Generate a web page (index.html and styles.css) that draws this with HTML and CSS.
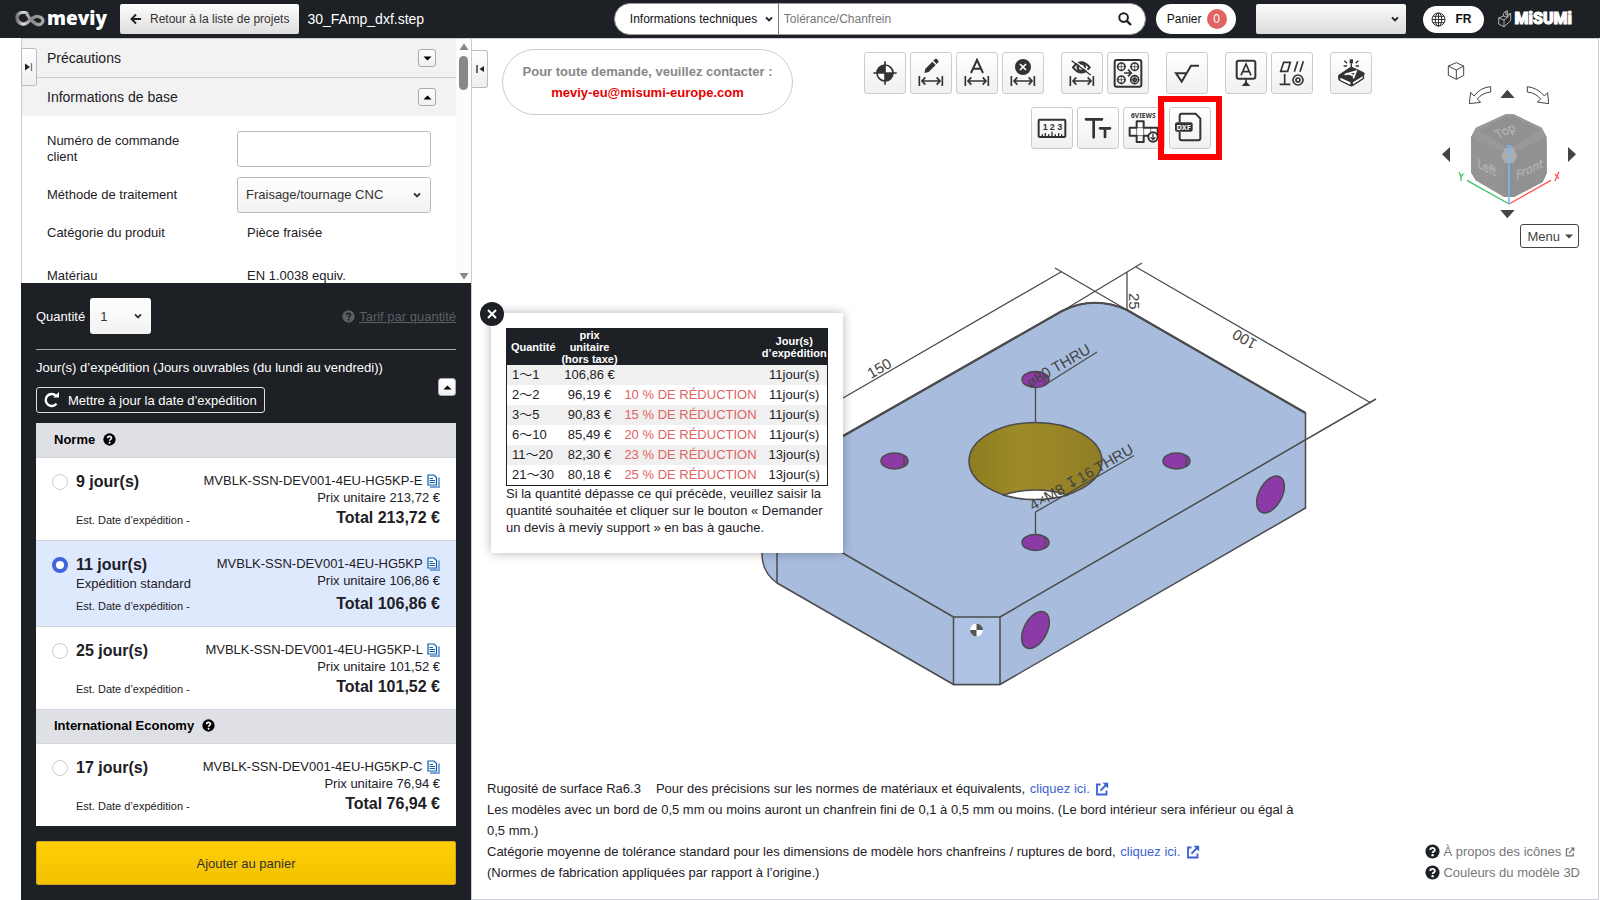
FILE: index.html
```html
<!DOCTYPE html>
<html lang="fr">
<head>
<meta charset="utf-8">
<title>meviy</title>
<link rel="stylesheet" href="styles.css">
</head>
<body>
<svg class="defs" aria-hidden="true">
  <symbol id="chev" viewBox="0 0 8 6"><path d="M1 1.3 4 4.3 7 1.3" fill="none" stroke="currentColor" stroke-width="1.9"/></symbol>
  <symbol id="help" viewBox="0 0 14 14"><circle cx="7" cy="7" r="6.6" fill="currentColor"/><path d="M4.9 5.6C4.9 3 9.2 3.1 9.2 5.5 9.2 7 7.1 6.9 7.1 8.4" fill="none" stroke="var(--mark,#fff)" stroke-width="1.7"/><circle cx="7.1" cy="10.4" r="1.1" fill="var(--mark,#fff)"/></symbol>
  <symbol id="copy" viewBox="0 0 13 14"><path d="M3 13h9V3.5" fill="none" stroke="#7aa6dc" stroke-width="2"/><path d="M1 1h6l2.500 2.500V11H1z" fill="#fff" stroke="#0b5cad" stroke-width="1.2"/><path d="M2.500 4.500H6M2.500 6.500H8M2.500 8.500H8" stroke="#0b5cad"/></symbol>
  <symbol id="ext" viewBox="0 0 14 14"><path d="M5.5 2.5H2v10h9.5V8.5" fill="none" stroke="currentColor" stroke-width="1.8"/><path d="M5.5 8.7 11 3" stroke="currentColor" stroke-width="1.9"/><path d="M7.5.8H13.200V6.500z" fill="currentColor"/></symbol>
  <symbol id="dim" viewBox="0 0 120 120"><path d="M28 72V102M97 72V102M36 87H90M46 76 36 87 46 98M80 76 90 87 80 98" fill="none" stroke="#333" stroke-width="5"/></symbol>
</svg>

<header class="topbar">
  <a class="logo" href="#" aria-label="meviy">
    <svg width="30" height="16" viewBox="0 0 30 16"><defs><linearGradient id="lg" x1="0" y1="0" x2="1" y2="0"><stop offset="0" stop-color="#777"/><stop offset=".25" stop-color="#ddd"/><stop offset=".55" stop-color="#888"/><stop offset="1" stop-color="#aaa"/></linearGradient></defs><path d="M13 3C9-.5 1.500 1.500 2 7c.5 6 7 7.500 10.500 4.500C16 8 19 5 23 5.500c5 .5 6.500 5 3 7.500-3.500 2-6-.5-9-3S14 4.500 11.500 3" fill="none" stroke="url(#lg)" stroke-width="3.200"/></svg>
    <span class="wordmark">meviy</span>
  </a>
  <button class="back"><svg width="12" height="12" viewBox="0 0 12 12"><path d="M11 6H2M6 1.5 1.5 6 6 10.5" fill="none" stroke="#222" stroke-width="1.9"/></svg>Retour à la liste de projets</button>
  <h1 class="file">30_FAmp_dxf.step</h1>
  <form class="search">
    <span class="sel"><select aria-label="Type de recherche"><option>Informations techniques</option></select><svg class="chev"><use href="#chev"/></svg></span>
    <input type="text" aria-label="Recherche" placeholder="Tolérance/Chanfrein">
    <button type="button" aria-label="Rechercher"><svg width="14" height="14" viewBox="0 0 14 14"><circle cx="5.6" cy="5.6" r="4.3" fill="none" stroke="#1d2025" stroke-width="2"/><path d="M8.8 8.8 13 13" stroke="#1d2025" stroke-width="2.4"/></svg></button>
  </form>
  <button class="cart">Panier <span class="count">0</span></button>
  <span class="sel account"><select aria-label="Compte"><option></option></select><svg class="chev"><use href="#chev"/></svg></span>
  <button class="lang"><svg width="15" height="15" viewBox="0 0 15 15" fill="none" stroke="#333" stroke-width="1"><circle cx="7.5" cy="7.5" r="6.5"/><ellipse cx="7.5" cy="7.5" rx="3.2" ry="6.5"/><path d="M7.5 1V14M1 7.5H14M2 4.3H13M2 10.7H13"/></svg>FR</button>
  <a class="misumi" href="#"><svg width="14" height="18" viewBox="0 0 42 54" fill="none" stroke="#ccc" stroke-width="2.500"><path d="M2 24 16 18V10L24 4 28 2V14L38 10V32L18 50 2 42zM2 24 18 30V50M18 30 28 22V14M16 18 28 22 38 10M24 4V16"/></svg><span>MiSUMi</span></a>
</header>

<main class="workspace">
  <aside class="side">
    <button class="fold fold-left" aria-label="Replier le panneau"><svg width="8" height="10" viewBox="0 0 8 10"><path d="M0 1.5 5 5 0 8.5z" fill="#222"/><path d="M6.5 1V9" stroke="#777" stroke-width="1.300"/></svg></button>
    <div class="scroller">
      <div class="scroll-body">
        <h2 class="section first">Précautions<button class="tog" aria-label="Ouvrir"><svg width="9" height="5" viewBox="0 0 9 5"><path d="M.5.5h8L4.5 4.5z"/></svg></button></h2>
        <h2 class="section">Informations de base<button class="tog" aria-label="Fermer"><svg width="9" height="5" viewBox="0 0 9 5"><path d="M.5 4.5h8L4.5.5z"/></svg></button></h2>
        <div class="fields">
          <label for="ordernum">Numéro de commande client</label>
          <input id="ordernum" type="text">
          <label for="method">Méthode de traitement</label>
          <span class="sel method"><select id="method"><option>Fraisage/tournage CNC</option></select><svg class="chev"><use href="#chev"/></svg></span>
          <span class="k">Catégorie du produit</span><span class="v">Pièce fraisée</span>
          <span class="k last">Matériau</span><span class="v last">EN 1.0038 equiv.</span>
        </div>
      </div>
      <div class="bar"><svg width="10" height="8" viewBox="0 0 10 8"><path d="M5 .5 9.5 7H.5z" fill="#888"/></svg><span class="thumb"></span><svg width="10" height="8" viewBox="0 0 10 8"><path d="M5 7.5 9.5 1H.5z" fill="#888"/></svg></div>
    </div>

    <section class="order">
      <div class="qty">
        <label for="qty">Quantité</label>
        <span class="sel qsel"><select id="qty"><option>1</option></select><svg class="chev"><use href="#chev"/></svg></span>
        <a class="tarif" href="#"><svg width="13" height="13"><use href="#help"/></svg><span>Tarif par quantité</span></a>
      </div>
      <p class="ship">Jour(s) d’expédition (Jours ouvrables (du lundi au vendredi))</p>
      <div class="refresh-row">
        <button class="refresh"><svg width="16" height="16" viewBox="0 0 16 16"><path d="M12.5 11.600A6 6 0 1 1 12 3.800" fill="none" stroke="#fff" stroke-width="2.4"/><path d="M9.200 5.500H15V0z" fill="#fff"/></svg>Mettre à jour la date d’expédition</button>
        <button class="tog" aria-label="Fermer"><svg width="9" height="5" viewBox="0 0 9 5"><path d="M.5 4.5h8L4.5.5z"/></svg></button>
      </div>
      <div class="plans">
        <h3>Norme<svg width="13" height="13"><use href="#help"/></svg></h3>
        <label class="plan"><input type="radio" name="plan"><span class="when"><b>9 jour(s)</b><small>Est. Date d’expédition -</small></span><span class="cost"><span>MVBLK-SSN-DEV001-4EU-HG5KP-E <svg class="cp"><use href="#copy"/></svg></span><span>Prix unitaire 213,72 €</span><b>Total 213,72 €</b></span></label>
        <label class="plan on"><input type="radio" name="plan" checked><span class="when"><b>11 jour(s)</b><span>Expédition standard</span><small>Est. Date d’expédition -</small></span><span class="cost"><span>MVBLK-SSN-DEV001-4EU-HG5KP <svg class="cp"><use href="#copy"/></svg></span><span>Prix unitaire 106,86 €</span><b>Total 106,86 €</b></span></label>
        <label class="plan"><input type="radio" name="plan"><span class="when"><b>25 jour(s)</b><small>Est. Date d’expédition -</small></span><span class="cost"><span>MVBLK-SSN-DEV001-4EU-HG5KP-L <svg class="cp"><use href="#copy"/></svg></span><span>Prix unitaire 101,52 €</span><b>Total 101,52 €</b></span></label>
        <h3 class="eco">International Economy<svg width="13" height="13"><use href="#help"/></svg></h3>
        <label class="plan"><input type="radio" name="plan"><span class="when"><b>17 jour(s)</b><small>Est. Date d’expédition -</small></span><span class="cost"><span>MVBLK-SSN-DEV001-4EU-HG5KP-C <svg class="cp"><use href="#copy"/></svg></span><span>Prix unitaire 76,94 €</span><b>Total 76,94 €</b></span></label>
      </div>
      <button class="add">Ajouter au panier</button>
    </section>
  </aside>

  <section class="viewer">
    <svg class="model" viewBox="472 39 1126 860" role="img" aria-label="Modèle 3D">
      <defs><linearGradient id="bore"><stop offset="0" stop-color="#8d7d20"/><stop offset=".35" stop-color="#9c8a29"/><stop offset=".6" stop-color="#9a8728"/><stop offset="1" stop-color="#8f7d24"/></linearGradient></defs>
      <g stroke="#4b4b4b" stroke-width="1.5" stroke-linejoin="round">
        <path d="M764 494 777 474 1062 311Q1094 295 1127 310L1305.5 413V508L1000 684.5H953.5L777 583Q763 573 762 556V505z" fill="#a8bcde"/>
        <path d="M953.5 617H1000V684.5H953.5z" fill="#aec2e6"/>
        <path d="M777 515V583M777 515 953.5 617M1000 617 1376 399" fill="none"/>
        <path d="M843 436 1062 311Q1094 295 1127 310L1305.5 413" fill="none" stroke-width="2.2"/>
        <path d="M843 398 1061 272M1055 268 1127 310M1064 310 1142 263M1136 267 1371 403M1127 272V310" fill="none" stroke-width="1.3"/>
        <ellipse cx="1035.5" cy="461" rx="66.5" ry="38.5" fill="url(#bore)"/>
        <path d="M1003 495Q1035 485 1068 495Q1035 504 1003 495z" fill="#fff"/>
        <g fill="#8c3ba6">
          <ellipse cx="1035.5" cy="379.5" rx="13.5" ry="8"/><ellipse cx="894.5" cy="461" rx="13.5" ry="8"/><ellipse cx="1176.5" cy="461" rx="13.5" ry="8"/><ellipse cx="1035.5" cy="542.5" rx="13.5" ry="8"/>
          <ellipse cx="1270.5" cy="494.5" rx="11.5" ry="20" transform="rotate(28 1270.5 494.5)"/><ellipse cx="1035.5" cy="630" rx="11.5" ry="20" transform="rotate(28 1035.5 630)"/>
        </g>
        <path d="M1045 374V385M904 455.5V466.5M1186 455.5V466.5M1045 537V548M1035.5 387V422.5M1043 386 1097 352M1035.5 534V512L1134 455.5" fill="none" stroke-width="1.3"/>
      </g>
      <circle cx="976.5" cy="630" r="6.5" fill="#fff"/><path d="M976.5 630V623.5A6.5 6.5 0 0 1 983 630zM976.5 630V636.5A6.5 6.5 0 0 1 970 630z" fill="#555"/>
      <g class="dims">
        <text transform="translate(871 379) rotate(-30)">150</text>
        <text transform="translate(1258 341) rotate(210)">100</text>
        <text transform="translate(1129 293) rotate(90)">25</text>
        <text transform="translate(1030 388) rotate(-30)">⌀80 THRU</text>
        <text transform="translate(1033 511) rotate(-30)">4×M8 ↧16 THRU</text>
      </g>
    </svg>

    <div class="viewer-top">
      <button class="fold fold-right" aria-label="Replier"><svg width="8" height="10" viewBox="0 0 8 10"><path d="M8 2 3.5 5 8 8z" fill="#222"/><path d="M1 1V9" stroke="#222" stroke-width="1.300"/></svg></button>
      <div class="contact">Pour toute demande, veuillez contacter :<a href="#">meviy-eu@misumi-europe.com</a></div>
      <div class="tools">
        <div class="row">
          <div class="grp">
            <button aria-label="Origine"><svg viewBox="3 3 120 120"><circle cx="63" cy="63" r="24" fill="#fff" stroke="#333" stroke-width="5"/><path d="M63 63V39A24 24 0 0 0 39 63zM63 63V87A24 24 0 0 0 87 63z" fill="#333"/><path d="M63 28V98M28 63H98" stroke="#333" stroke-width="5"/></svg></button>
            <button aria-label="Modifier la cote"><svg viewBox="3 3 120 120"><use href="#dim" width="120" height="120"/><path d="M43 63 46 50 67 29 77 39 56 60zM70 26 75 21Q79 19 83 23T85 31L80 36z" fill="#333"/></svg></button>
            <button aria-label="Cote automatique"><svg viewBox="3 3 120 120"><use href="#dim" width="120" height="120"/><path d="M45 63 63 24 81 63M51 50H75" fill="none" stroke="#333" stroke-width="6"/></svg></button>
            <button aria-label="Supprimer la cote"><svg viewBox="3 3 120 120"><use href="#dim" width="120" height="120"/><circle cx="63" cy="45" r="24" fill="#333"/><path d="M54 36 72 54M72 36 54 54" stroke="#fff" stroke-width="5"/></svg></button>
          </div>
          <div class="grp">
            <button aria-label="Masquer la cote"><svg viewBox="3 3 120 120"><use href="#dim" width="120" height="120"/><path d="M36 46Q61 15 86 46Q61 77 36 46z" fill="#fff" stroke="#333" stroke-width="6"/><circle cx="61" cy="46" r="11" fill="none" stroke="#333" stroke-width="7"/><path d="M35 22 92 65" stroke="#fff" stroke-width="4"/><path d="M32 26 89 69" stroke="#333" stroke-width="4"/></svg></button>
            <button aria-label="Groupe de trous"><svg viewBox="3 3 120 120" fill="none" stroke="#333" stroke-width="6"><rect x="23" y="24" width="80" height="80" rx="6"/><g stroke-width="5"><circle cx="43" cy="44" r="11"/><circle cx="83" cy="44" r="11"/><circle cx="43" cy="83" r="11"/><circle cx="83" cy="83" r="12"/><circle cx="83" cy="83" r="5"/></g><path stroke-width="2" d="M29 44H57M43 30V58M69 44H97M83 30V58M29 83H57M43 69V97M69 83H97M83 69V97"/><path stroke-width="5" d="M51 63H72M63 53 73 63 63 73"/></svg></button>
          </div>
          <div class="grp"><button aria-label="Rugosité"><svg viewBox="3 3 120 120"><path d="M99 41H75L47 89 30 64H61" fill="none" stroke="#333" stroke-width="6"/></svg></button></div>
          <div class="grp">
            <button aria-label="Référence"><svg viewBox="3 3 120 120"><rect x="35" y="26" width="56" height="54" rx="6" fill="none" stroke="#333" stroke-width="6"/><path d="M48 70 63 36 78 70M53 59H73M63 80V95" fill="none" stroke="#333" stroke-width="5"/><path d="M63 88 76 102H50z" fill="#333"/></svg></button>
            <button aria-label="Tolérance géométrique"><svg viewBox="3 3 120 120" fill="none" stroke="#333" stroke-width="5"><path d="M38 31H58L50 58H29zM80 28 70 59M97 28 87 59M41 66V96M26 97H58"/><circle cx="81" cy="84" r="15"/><circle cx="81" cy="84" r="6"/></svg></button>
          </div>
          <div class="grp"><button aria-label="Gravure"><svg viewBox="3 3 120 120"><path d="M26 70 60 47Q64 45 68 47L101 62Q105 65 101 69V80L68 101Q64 103 60 101L28 85Q25 84 26 70z" fill="#333" stroke="#333" stroke-width="3"/><path d="M31 77 61 91V98L31 84zM69 91 98 73V79L69 97z" fill="#fff"/><path d="M44 68 78 58 70 79M56 65 71 71" fill="none" stroke="#fff" stroke-width="5"/><path d="M64 22V34" stroke="#333" stroke-width="10"/><path d="M64 34V46M43 26 51 34M85 26 77 34M41 42H51M77 42H87" stroke="#333" stroke-width="4"/></svg></button></div>
        </div>
        <div class="row">
          <div class="grp">
            <button aria-label="Mesurer"><svg viewBox="3 3 120 120"><rect x="23" y="38" width="80" height="52" rx="3" fill="none" stroke="#333" stroke-width="6"/><path d="M34 90V82M43 90V78M53 90V82M63 90V74M73 90V82M83 90V78M92 90V82" stroke="#333" stroke-width="4"/><text x="43" y="69" class="t123">1</text><text x="64" y="69" class="t123">2</text><text x="86" y="69" class="t123">3</text></svg></button>
            <button aria-label="Taille du texte"><svg viewBox="3 3 120 120"><path d="M27 37H75M50 37V91M69 64H99M84 64V90" stroke="#333" stroke-width="8" stroke-linecap="round"/></svg></button>
            <button aria-label="6 vues"><svg viewBox="3 3 120 120"><text x="61" y="32" class="tv">6VIEWS</text><path d="M41 43H62V62H104V86H62V105H41V86H20V62H41z" fill="#fff" stroke="#333" stroke-width="6" stroke-linejoin="round"/><path d="M41 62H62V86H41zM83 62V86" fill="none" stroke="#333" stroke-width="2"/><circle cx="90" cy="90" r="14" fill="#fff" stroke="#333" stroke-width="6"/><path d="M90 80V97M83 91 90 98 97 91" fill="none" stroke="#333" stroke-width="4"/></svg></button>
            <button class="dxf" aria-label="Exporter DXF"><svg viewBox="3 3 120 120"><path d="M32 46V26Q32 20 38 20H80L94 35V94Q94 100 88 100H38Q32 100 32 94V74" fill="none" stroke="#333" stroke-width="6"/><rect x="18" y="46" width="53" height="28" rx="6" fill="#333"/><text x="44" y="68" class="tdxf">DXF</text></svg></button>
          </div>
        </div>
      </div>
      <nav class="nav3d">
        <svg width="140" height="162" viewBox="1020 174 420 486">
          <g fill="#fff" stroke="#444" stroke-width="3" stroke-linejoin="round"><path d="M1069 188 1091 198V226L1069 238 1045 226V198zM1045 198 1069 210 1091 198M1069 210V238"/><path d="M1172 260Q1142 262 1122 288L1112 277 1108 311 1142 307 1132 297Q1146 279 1172 276zM1282 260Q1314 264 1333 288L1343 278 1346 311 1312 306 1322 297Q1308 279 1282 276z"/></g>
          <path d="M1201 294H1244L1222 269zM1201 630H1244L1222 655zM1050 441V486L1026 463zM1404 441V486L1428 463z" fill="#444"/>
          <path d="M1217 343H1241L1325 383 1340 412V520L1328 546 1243 591H1212L1127 541 1113 517V412L1128 383z" fill="#8f8f8f"/>
          <path d="M1113 425 1130 415 1204 453V478L1215 490V591L1127 541 1113 517z" fill="#949494"/><path d="M1340 425 1325 415 1250 453V478L1239 490V591L1328 546 1340 520z" fill="#919191"/><path d="M1128 383 1217 343H1241L1325 383 1340 412 1250 453 1241 444H1215L1204 453 1113 412z" fill="#999"/><path d="M1217 350H1241L1318 390 1238 440H1217L1137 392z" fill="#919191"/><path d="M1215 444H1241L1252 467 1241 489H1215L1203 467z" fill="#adadad"/>
          <g class="faces"><text transform="matrix(.88 -.4 .5 .85 1194 416)">Top</text><text transform="matrix(.88 .42 0 1 1132 502)">Left</text><text transform="matrix(.88 -.42 0 1 1249 539)">Front</text></g>
          <path d="M1227 612 1101 541" stroke="#3cc463" stroke-width="4"/><path d="M1227 612 1353 541" stroke="#f55" stroke-width="4"/><path d="M1227 612V467" stroke="#78b7f5" stroke-width="5"/>
          <path d="M1220 436 1235 440 1219 456 1234 460" stroke="#78b7f5" stroke-width="4" fill="none"/><path d="M1077 517 1083 530 1090 521M1083 530V542" stroke="#3cc463" stroke-width="4" fill="none"/><path d="M1365 522 1377 536M1377 515 1365 543" stroke="#f55" stroke-width="4" fill="none"/>
        </svg>
        <button class="menu">Menu<svg width="8" height="5" viewBox="0 0 8 5"><path d="M0 .5h8L4 4.5z" fill="#444"/></svg></button>
      </nav>
    </div>

    <div class="popup" role="dialog" aria-label="Tarif par quantité">
      <button class="close" aria-label="Fermer"><svg width="10" height="10" viewBox="0 0 10 10"><path d="M1 1 9 9M9 1 1 9" stroke="#fff" stroke-width="2"/></svg></button>
      <table>
        <thead><tr><th class="c1">Quantité</th><th class="c2">prix unitaire (hors taxe)</th><th></th><th class="c4">Jour(s) d’expédition</th></tr></thead>
        <tbody>
          <tr><td>1～1</td><td>106,86 €</td><td></td><td>11jour(s)</td></tr>
          <tr><td>2～2</td><td>96,19 €</td><td>10 % DE RÉDUCTION</td><td>11jour(s)</td></tr>
          <tr><td>3～5</td><td>90,83 €</td><td>15 % DE RÉDUCTION</td><td>11jour(s)</td></tr>
          <tr><td>6～10</td><td>85,49 €</td><td>20 % DE RÉDUCTION</td><td>11jour(s)</td></tr>
          <tr><td>11～20</td><td>82,30 €</td><td>23 % DE RÉDUCTION</td><td>13jour(s)</td></tr>
          <tr><td>21～30</td><td>80,18 €</td><td>25 % DE RÉDUCTION</td><td>13jour(s)</td></tr>
        </tbody>
      </table>
      <p>Si la quantité dépasse ce qui précède, veuillez saisir la quantité souhaitée et cliquer sur le bouton « Demander un devis à meviy support » en bas à gauche.</p>
    </div>

    <footer class="notes">
      <div class="txt">
        <p><span class="ra">Rugosité de surface Ra6.3</span>Pour des précisions sur les normes de matériaux et équivalents, <a href="#">cliquez ici. <svg><use href="#ext"/></svg></a></p>
        <p>Les modèles avec un bord de 0,5 mm ou moins auront un chanfrein fini de 0,1 à 0,5 mm ou moins. (Le bord intérieur sera inférieur ou égal à 0,5 mm.)</p>
        <p>Catégorie moyenne de tolérance standard pour les dimensions de modèle hors chanfreins / ruptures de bord, <a href="#">cliquez ici. <svg><use href="#ext"/></svg></a></p>
        <p>(Normes de fabrication appliquées par rapport à l’origine.)</p>
      </div>
      <div class="helps">
        <a href="#"><svg class="q"><use href="#help"/></svg>À propos des icônes <svg class="e"><use href="#ext"/></svg></a>
        <a href="#"><svg class="q"><use href="#help"/></svg>Couleurs du modèle 3D</a>
      </div>
    </footer>
  </section>
</main>
</body>
</html>
```
FILE: styles.css
```css
* { box-sizing: border-box; }
body {
  margin: 0;
  height: 100vh;
  display: flex;
  flex-direction: column;
  overflow: hidden;
  background: #fff;
  color: #1d2025;
  font: 13px/17px "Liberation Sans", Arial, "Noto Sans CJK JP", sans-serif;
}
button, input, select { font: inherit; color: inherit; margin: 0; }
button { padding: 0; border: 0; background: none; }
h1, h2, h3, p { margin: 0; font: inherit; }
a { color: inherit; text-decoration: none; }
svg { flex: none; }
.defs { position: absolute; width: 0; height: 0; }

.sel { display: inline-grid; align-items: center; }
.sel > * { grid-area: 1 / 1; }
.sel select { appearance: none; width: 100%; height: 100%; border: 0; background: none; border-radius: 2px; outline: 0; }
.chev { width: 8px; height: 6px; justify-self: end; margin-right: 9px; pointer-events: none; }

/* Top bar */
.topbar {
  flex: none;
  display: flex;
  align-items: center;
  height: 38px;
  padding: 0 28px 0 15px;
  background: #1d2025;
  font-size: 12px;
}
.logo { display: flex; align-items: center; gap: 2px; width: 105px; color: #fff; }
.wordmark { font: 800 19px/30px "Open Sans", sans-serif; margin-bottom: 2px; }
.back {
  display: flex; align-items: center; gap: 8px;
  height: 30px; padding: 0 10px;
  border-radius: 2px;
  background: linear-gradient(#fdfdfd, #dedede);
  color: #333;
}
.file { margin-left: 8px; color: #fff; font-size: 14px; }
.search {
  display: flex; align-items: center;
  width: 532px; height: 32px;
  margin-left: auto;
  background: #fff;
  border: 1px solid #999;
  border-radius: 16px;
}
.search .sel { width: 164px; height: 30px; border-right: 1px solid #777; }
.search select { padding: 0 0 0 15px; color: #111; }
.search .chev { margin-right: 5px; }
.search input { flex: 1; min-width: 0; border: 0; padding: 0 5px; background: none; outline: 0; }
.search input::placeholder { color: #777; }
.search button { padding: 0 13px; display: flex; }
.cart {
  display: flex; align-items: center; gap: 5px;
  height: 30px; margin-left: 10px; padding: 0 9px 0 11px;
  border-radius: 15px; background: #fff; color: #111;
}
.count { width: 20px; height: 20px; border-radius: 50%; background: #e06464; color: #fff; line-height: 20px; }
.account { width: 150px; height: 30px; margin-left: 20px; border-radius: 2px; background: linear-gradient(#fafafa, #dcdcdc); }
.account .chev { margin-right: 7px; }
.lang {
  display: flex; align-items: center; gap: 10px;
  height: 27px; margin-left: 17px; padding: 0 12px 0 8px;
  border-radius: 14px; background: #fff; font-weight: bold; color: #111;
}
.misumi { display: flex; align-items: center; gap: 3px; margin-left: 14px; color: #fff; font: 900 16px/20px Roboto, sans-serif; -webkit-text-stroke: 1px #fff; }

/* Workspace */
.workspace { flex: 1; min-height: 0; display: flex; padding: 0 1px 0 21px; }
.side { flex: none; width: 451px; display: flex; flex-direction: column; position: relative; border-right: 1px solid #ccc; }
.fold {
  display: grid; place-items: center;
  width: 16px; height: 38px;
  border: 1px solid #bbb;
  background: linear-gradient(#fff, #eee);
}
.fold-left { position: absolute; left: 0; top: 10px; border-radius: 0 3px 3px 0; }
.fold-right { margin-top: 11px; border-left: 0; border-radius: 0 3px 3px 0; }
.scroller { height: 245px; flex: none; display: flex; border: solid #ccc; border-width: 1px 0 0 1px; }
.scroll-body { flex: 1; overflow: hidden; }
.section {
  display: flex; align-items: center; justify-content: space-between;
  height: 38px; padding: 0 20px 0 25px;
  background: #f2f2f2;
  font-size: 14px;
}
.first { height: 39px; border-bottom: 1px solid #ccc; }
.tog {
  display: grid; place-items: center;
  width: 18px; height: 18px;
  border: 1px solid #aaa; border-radius: 3px;
  background: linear-gradient(#fff, #f0f0f0);
}
.fields { display: grid; grid-template-columns: 145px 194px; column-gap: 45px; row-gap: 10px; padding: 15px 0 0 25px; line-height: 16px; align-items: center; }
.fields input { height: 36px; border: 1px solid #bbb; border-radius: 3px; }
.method { height: 36px; border: 1px solid #bbb; border-radius: 3px; background: linear-gradient(#fff, #f2f2f2); color: #333; }
.method select { padding: 0 8px; }
.fields .k, .fields .v { height: 20px; line-height: 20px; }
.fields .v { padding-left: 10px; }
.fields .last { margin-top: 13px; }
.bar { width: 15px; display: flex; flex-direction: column; align-items: center; padding: 4px 0 3px; background: #fcfcfc; }
.thumb { width: 9px; height: 34px; margin: 5px 0 auto; border-radius: 5px; background: #888; }

/* Order panel */
.order { flex: 1; display: flex; flex-direction: column; padding: 15px; background: #1d2025; color: #fff; }
.qty { display: flex; align-items: center; gap: 5px; padding-bottom: 15px; border-bottom: 1px solid #aaa; }
.qsel { width: 61px; height: 36px; border-radius: 3px; background: linear-gradient(#fff, #f2f2f2); color: #333; }
.qsel select { padding: 0 10px; }
.tarif { display: flex; align-items: center; gap: 4px; margin-left: auto; color: #5c5f63; --mark: #1d2025; }
.tarif span { text-decoration: underline; }
.ship { margin-top: 9px; }
.refresh-row { display: flex; justify-content: space-between; margin-top: 2px; color: #111; }
.refresh { display: flex; align-items: center; gap: 8px; height: 26px; margin-top: 9px; padding: 0 7px; border: 1px solid #ddd; border-radius: 3px; color: #fff; }
.plans { margin-top: 10px; background: #fff; color: #1d2025; }
.plans h3 { display: flex; align-items: center; gap: 8px; height: 35px; padding: 0 18px 2px; border-bottom: 1px solid #d4d5da; background: #dfe0e5; font-weight: bold; color: #000; }
.plans .eco { height: 34px; }
.plan { display: flex; height: 83px; padding: 14px 16px 0; border-bottom: 1px solid #d4d5da; }
.plan:last-child { height: 82px; border: 0; }
.plan input { appearance: none; flex: none; width: 16px; height: 16px; margin: 2px 8px 0 0; border: 1px solid #ccc; border-radius: 50%; background: #fff; }
.plan.on { height: 86px; background: #dfe9fe; }
.plan.on input { border: 4px solid #4264dc; }
.when { display: flex; flex-direction: column; height: 55px; }
.on .when { height: 58px; }
.when b { font-size: 16px; line-height: 20px; }
.when small { margin-top: auto; font-size: 11px; line-height: 13px; }
.cost { flex: 1; display: flex; flex-direction: column; text-align: right; }
.cost b { margin-top: 2px; font-size: 16px; line-height: 20px; }
.on .cost b { margin-top: 5px; }
.cp { width: 13px; height: 14px; margin-left: 1px; vertical-align: -3px; }
.add { height: 44px; margin-top: 15px; border: 1px solid #d5a520; border-radius: 2px; background: linear-gradient(#ffce05, #f2c200); color: #333; }

/* Viewer */
.viewer { flex: 1; min-width: 0; display: flex; flex-direction: column; justify-content: space-between; position: relative; border: 1px solid #ccd; border-left: 0; }
.model { position: absolute; inset: 0; width: 100%; height: 100%; }
.dims { font-size: 15px; fill: #444; }
.viewer-top { position: relative; display: flex; align-items: flex-start; }
.contact {
  width: 291px; margin: 10px 0 0 14px; padding: 11px 0;
  border: 1px solid #ccc; border-radius: 33px;
  color: #888; font-weight: bold; line-height: 21px; text-align: center;
}
.contact a { display: block; color: #e60000; }
.tools { flex: 1; padding-top: 13px; display: flex; flex-direction: column; gap: 13px; }
.row { display: flex; justify-content: center; gap: 17px; }
.row + .row { padding-left: 6px; }
.grp { display: flex; gap: 4px; }
.grp button { position: relative; width: 42px; height: 42px; border: 1px solid #ccc; border-radius: 3px; background: linear-gradient(#fff, #f0f0f0); }
.grp svg { display: block; width: 40px; height: 40px; }
.grp .dxf::after { content: ""; position: absolute; inset: -12px; border: 6px solid #f00; }
.grp text { text-anchor: middle; fill: #333; }
.t123 { font: bold 27px "Liberation Sans", sans-serif; }
.tv { font: bold 20px "Noto Sans", sans-serif; }
.grp .tdxf { font: bold 22px "Noto Sans", sans-serif; fill: #fff; }
.nav3d { width: 158px; padding-top: 19px; margin-left: -2px; display: flex; flex-direction: column; }
.faces { font: 36px "Open Sans", sans-serif; fill: #999; stroke: #ccc; stroke-width: 1px; }
.menu { display: flex; align-items: center; gap: 5px; align-self: flex-end; height: 24px; margin: 4px 19px 0 0; padding: 0 5px 0 6px; border: 1px solid #444; border-radius: 3px; background: #fff; color: #444; }

.popup { position: absolute; left: 19px; top: 274px; width: 352px; padding: 15px 15px 17px; background: #fff; box-shadow: 0 0 10px rgba(0,0,0,.3); }
.close { position: absolute; left: -11px; top: -11px; display: grid; place-items: center; width: 24px; height: 24px; border-radius: 50%; background: #1d2025; }
.popup table { width: 100%; border-collapse: collapse; border: 1px solid #1d2025; text-align: center; table-layout: fixed; }
.popup th { padding: 0; background: #1d2025; color: #fff; font-size: 11px; line-height: 12px; }
.popup td { height: 20px; padding: 0; line-height: 18px; white-space: nowrap; }
.popup td:first-child { text-align: left; padding-left: 5px; }
.popup td:nth-child(3) { color: #e06464; }
.popup tbody tr:nth-child(odd) { background: #f0f0f0; }
.popup p { margin-top: -1px; }
.c1 { width: 53px; }
.c2 { width: 60px; }
.c4 { width: 66px; }

.notes { position: relative; display: flex; justify-content: space-between; align-items: flex-end; padding: 0 18px 16px 15px; line-height: 21px; }
.txt { width: 814px; }
.ra { margin-right: 15px; }
.txt a { margin-left: 1px; color: #3d5fd6; }
.txt svg { width: 14px; height: 14px; margin-left: 2px; vertical-align: -3px; }
.helps { display: flex; flex-direction: column; color: #777; }
.q { width: 15px; height: 15px; margin-right: 3px; color: #1d2025; vertical-align: -3px; }
.e { width: 10px; height: 10px; vertical-align: -1px; }
```
